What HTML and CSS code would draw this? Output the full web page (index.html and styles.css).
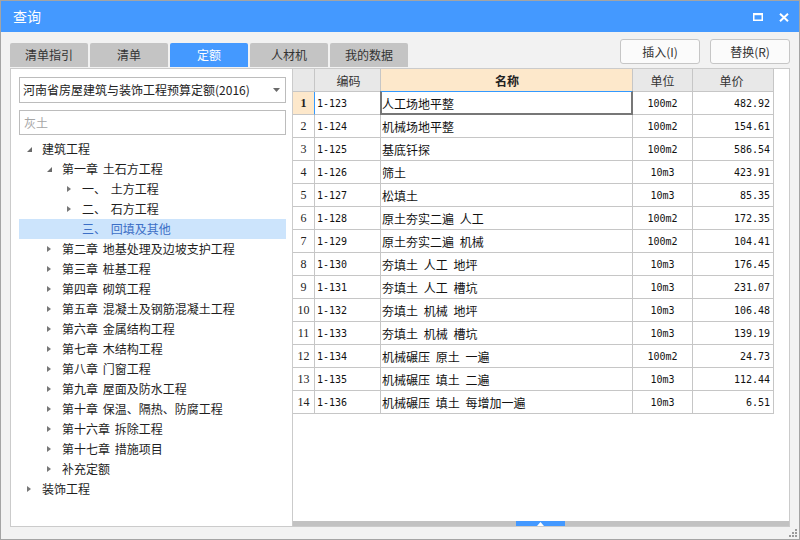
FILE: index.html
```html
<!DOCTYPE html>
<html lang="zh-CN">
<head>
<meta charset="utf-8">
<title>查询</title>
<link rel="stylesheet" href="styles.css">
</head>
<body>
<div class="window">
  <div class="titlebar">
    <span class="title">查询</span>
    <div class="win-btns">
      <svg class="ico-max" width="10" height="8" viewBox="0 0 10 8"><rect x="0.75" y="1" width="8.5" height="6.25" fill="none" stroke="#fff" stroke-width="1.5"/><rect x="0" y="0" width="10" height="2.2" fill="#fff"/></svg>
      <svg class="ico-close" width="10" height="9" viewBox="0 0 10 9"><path d="M1 0.8 L9 8.2 M9 0.8 L1 8.2" stroke="#fff" stroke-width="2"/></svg>
    </div>
  </div>
  <div class="body">
    <div class="topbar">
      <div class="tabs">
        <div class="tab">清单指引</div>
        <div class="tab">清单</div>
        <div class="tab active">定额</div>
        <div class="tab">人材机</div>
        <div class="tab">我的数据</div>
      </div>
      <div class="actions">
        <button class="btn">插入(I)</button>
        <button class="btn">替换(R)</button>
      </div>
    </div>
    <div class="panels">
      <div class="left">
        <div class="select">
          <span class="select-text">河南省房屋建筑与装饰工程预算定额(2016)</span>
          <svg class="select-arrow" width="7" height="4" viewBox="0 0 7 4"><path d="M0 0 H7 L3.5 4 Z" fill="#6a6a6a"/></svg>
        </div>
        <div class="search">灰土</div>
        <ul class="tree">
          <li class="node l0"><span class="tg exp"></span><span class="lbl">建筑工程</span></li>
          <li class="node l1"><span class="tg exp"></span><span class="lbl">第一章 土石方工程</span></li>
          <li class="node l2"><span class="tg col"></span><span class="lbl">一、 土方工程</span></li>
          <li class="node l2"><span class="tg col"></span><span class="lbl">二、 石方工程</span></li>
          <li class="node l2 sel"><span class="tg"></span><span class="lbl">三、 回填及其他</span></li>
          <li class="node l1"><span class="tg col"></span><span class="lbl">第二章 地基处理及边坡支护工程</span></li>
          <li class="node l1"><span class="tg col"></span><span class="lbl">第三章 桩基工程</span></li>
          <li class="node l1"><span class="tg col"></span><span class="lbl">第四章 砌筑工程</span></li>
          <li class="node l1"><span class="tg col"></span><span class="lbl">第五章 混凝土及钢筋混凝土工程</span></li>
          <li class="node l1"><span class="tg col"></span><span class="lbl">第六章 金属结构工程</span></li>
          <li class="node l1"><span class="tg col"></span><span class="lbl">第七章 木结构工程</span></li>
          <li class="node l1"><span class="tg col"></span><span class="lbl">第八章 门窗工程</span></li>
          <li class="node l1"><span class="tg col"></span><span class="lbl">第九章 屋面及防水工程</span></li>
          <li class="node l1"><span class="tg col"></span><span class="lbl">第十章 保温、隔热、防腐工程</span></li>
          <li class="node l1"><span class="tg col"></span><span class="lbl">第十六章 拆除工程</span></li>
          <li class="node l1"><span class="tg col"></span><span class="lbl">第十七章 措施项目</span></li>
          <li class="node l1"><span class="tg col"></span><span class="lbl">补充定额</span></li>
          <li class="node l0"><span class="tg col"></span><span class="lbl">装饰工程</span></li>
        </ul>
      </div>
      <div class="right">
        <div class="grid">
          <div class="row head">
            <div class="c-num"></div>
            <div class="c-code h">编码</div>
            <div class="c-name h hsel">名称</div>
            <div class="c-unit h">单位</div>
            <div class="c-price h">单价</div>
          </div>
          <div class="row cur">
            <div class="c-num numsel">1</div>
            <div class="c-code">1-123</div>
            <div class="c-name cellsel">人工场地平整</div>
            <div class="c-unit">100m2</div>
            <div class="c-price">482.92</div>
          </div>
          <div class="row"><div class="c-num">2</div><div class="c-code">1-124</div><div class="c-name">机械场地平整</div><div class="c-unit">100m2</div><div class="c-price">154.61</div></div>
          <div class="row"><div class="c-num">3</div><div class="c-code">1-125</div><div class="c-name">基底钎探</div><div class="c-unit">100m2</div><div class="c-price">586.54</div></div>
          <div class="row"><div class="c-num">4</div><div class="c-code">1-126</div><div class="c-name">筛土</div><div class="c-unit">10m3</div><div class="c-price">423.91</div></div>
          <div class="row"><div class="c-num">5</div><div class="c-code">1-127</div><div class="c-name">松填土</div><div class="c-unit">10m3</div><div class="c-price">85.35</div></div>
          <div class="row"><div class="c-num">6</div><div class="c-code">1-128</div><div class="c-name">原土夯实二遍 人工</div><div class="c-unit">100m2</div><div class="c-price">172.35</div></div>
          <div class="row"><div class="c-num">7</div><div class="c-code">1-129</div><div class="c-name">原土夯实二遍 机械</div><div class="c-unit">100m2</div><div class="c-price">104.41</div></div>
          <div class="row"><div class="c-num">8</div><div class="c-code">1-130</div><div class="c-name">夯填土 人工 地坪</div><div class="c-unit">10m3</div><div class="c-price">176.45</div></div>
          <div class="row"><div class="c-num">9</div><div class="c-code">1-131</div><div class="c-name">夯填土 人工 槽坑</div><div class="c-unit">10m3</div><div class="c-price">231.07</div></div>
          <div class="row"><div class="c-num">10</div><div class="c-code">1-132</div><div class="c-name">夯填土 机械 地坪</div><div class="c-unit">10m3</div><div class="c-price">106.48</div></div>
          <div class="row"><div class="c-num">11</div><div class="c-code">1-133</div><div class="c-name">夯填土 机械 槽坑</div><div class="c-unit">10m3</div><div class="c-price">139.19</div></div>
          <div class="row"><div class="c-num">12</div><div class="c-code">1-134</div><div class="c-name">机械碾压 原土 一遍</div><div class="c-unit">100m2</div><div class="c-price">24.73</div></div>
          <div class="row"><div class="c-num">13</div><div class="c-code">1-135</div><div class="c-name">机械碾压 填土 二遍</div><div class="c-unit">10m3</div><div class="c-price">112.44</div></div>
          <div class="row"><div class="c-num">14</div><div class="c-code">1-136</div><div class="c-name">机械碾压 填土 每增加一遍</div><div class="c-unit">10m3</div><div class="c-price">6.51</div></div>
        </div>
        <div class="hscroll">
          <div class="thumb"><svg width="7" height="4" viewBox="0 0 7 4"><path d="M0 4 H7 L3.5 0 Z" fill="#fff"/></svg></div>
        </div>
      </div>
    </div>
  </div>
  <svg class="grip" width="9" height="9" viewBox="0 0 9 9">
    <rect x="6" y="0" width="2" height="2" fill="#9a9a9a"/>
    <rect x="3" y="3" width="2" height="2" fill="#9a9a9a"/>
    <rect x="6" y="3" width="2" height="2" fill="#9a9a9a"/>
    <rect x="0" y="6" width="2" height="2" fill="#9a9a9a"/>
    <rect x="3" y="6" width="2" height="2" fill="#9a9a9a"/>
    <rect x="6" y="6" width="2" height="2" fill="#9a9a9a"/>
  </svg>
</div>
</body>
</html>
```

FILE: styles.css
```css
* { box-sizing: border-box; }
html, body { margin: 0; padding: 0; }
body {
  font-family: "Noto Sans CJK SC", "Noto Sans", sans-serif;
  font-size: 12px;
  color: #222;
  background: #f2f2f2;
}
.window {
  position: relative;
  width: 800px;
  height: 540px;
  border: 1px solid #a4a4a4;
  background: #f2f2f2;
  overflow: hidden;
}
.titlebar {
  height: 31px;
  background: #4499ff;
  display: flex;
  align-items: center;
  justify-content: space-between;
  padding: 0 10px 0 12px;
}
.title {
  color: #fff;
  font-size: 14px;
  line-height: 31px;
}
.win-btns {
  display: flex;
  align-items: center;
  gap: 16px;
  padding-top: 1px;
}
.ico-max, .ico-close { display: block; }

.body {
  padding: 7px 9px 0 9px;
}
.topbar {
  height: 29px;
  display: flex;
  justify-content: space-between;
}
.tabs {
  align-self: flex-end;
  display: flex;
  gap: 2px;
  margin-bottom: 1px;
}
.tab {
  width: 78px;
  height: 24px;
  line-height: 24px;
  text-align: center;
  background: #c4c4c4;
  color: #333;
  font-size: 12px;
  border-radius: 2px 2px 0 0;
}
.tab.active {
  background: #4499ff;
  color: #fff;
}
.actions {
  align-self: flex-start;
  display: flex;
  gap: 10px;
}
.btn {
  width: 80px;
  height: 25px;
  border: 1px solid #c6c6c6;
  border-radius: 3px;
  background: #fbfbfb;
  font-family: "Noto Sans CJK SC", "Noto Sans", sans-serif;
  font-size: 12px;
  color: #333;
  padding: 0;
}

.panels {
  display: flex;
  height: 459px;
}
.left {
  width: 283px;
  border: 1px solid #cbcbcb;
  background: #fff;
  padding: 8px 0 0 8px;
}
.select {
  width: 267px;
  height: 26px;
  border: 1px solid #bcbcbc;
  display: flex;
  align-items: center;
  justify-content: space-between;
  padding: 0 5px 0 3px;
}
.select-text { line-height: 24px; color: #222; }
.select-arrow { display: block; }
.search {
  width: 267px;
  height: 25px;
  margin-top: 7px;
  border: 1px solid #bcbcbc;
  color: #a6a6a6;
  line-height: 23px;
  padding-left: 4px;
}
.tree {
  list-style: none;
  margin: 4px 0 0 0;
  padding: 0;
  width: 267px;
}
.node {
  height: 20px;
  display: flex;
  align-items: center;
  line-height: 20px;
  color: #1e1e1e;
  word-spacing: 2px;
}
.node.l0 { padding-left: 8px; }
.node.l1 { padding-left: 28px; }
.node.l2 { padding-left: 48px; }
.node.sel { background: #cce4fc; color: #3c6fc6; }
.tg {
  width: 15px;
  height: 20px;
  position: relative;
  flex: none;
}
.tg.exp::before {
  content: "";
  position: absolute;
  left: 0;
  top: 8px;
  width: 0;
  height: 0;
  border-left: 5px solid transparent;
  border-bottom: 5px solid #6a6a6a;
}
.tg.col::before {
  content: "";
  position: absolute;
  left: 0;
  top: 6.5px;
  width: 0;
  height: 0;
  border-top: 3.5px solid transparent;
  border-bottom: 3.5px solid transparent;
  border-left: 4px solid #777;
}

.right {
  flex: 1;
  border: 1px solid #cbcbcb;
  border-left: none;
  background: #fff;
  display: flex;
  flex-direction: column;
}
.grid { width: 481px; }
.row {
  display: grid;
  grid-template-columns: 22px 66px 252px 60px 81px;
  height: 23px;
}
.row > div {
  border-right: 1px solid #c6c6c6;
  border-bottom: 1px solid #c6c6c6;
  display: flex;
  align-items: center;
  white-space: pre;
  overflow: visible;
}
.row.head > div {
  background: #e8e8e8;
  justify-content: center;
  color: #333;
  font-family: "Noto Sans CJK SC", "Noto Sans", sans-serif;
  font-size: 12px;
}
.row.head > .hsel {
  background: #fde8cb;
  font-weight: bold;
  color: #222;
}
.c-num {
  justify-content: center;
  font-family: "Liberation Serif", serif;
  font-size: 12px;
  color: #222;
}
.c-num.numsel {
  background: #fde8cb;
  font-weight: bold;
  border-right-color: #3399ff !important;
}
.c-code {
  font-family: "DejaVu Sans Mono", monospace;
  font-size: 10px;
  padding-left: 2px;
  color: #111;
}
.c-name {
  font-size: 12px;
  padding-left: 1px;
  color: #111;
  word-spacing: 3px;
}
.c-unit {
  font-family: "DejaVu Sans Mono", monospace;
  font-size: 10px;
  justify-content: center;
  color: #111;
}
.c-price {
  font-family: "DejaVu Sans Mono", monospace;
  font-size: 10px;
  justify-content: flex-end;
  padding-right: 3px;
  color: #111;
}
.cellsel { position: relative; }
.cellsel::after {
  content: "";
  position: absolute;
  left: -1px;
  top: -1px;
  right: -1px;
  bottom: -1px;
  border: 2px solid #777;
  border-top: 1px solid #3399ff;
}
.hscroll {
  margin-top: auto;
  height: 5px;
  background: #c2c2c2;
}
.thumb {
  margin-left: 223px;
  width: 49px;
  height: 5px;
  background: #4499ff;
  display: flex;
  align-items: center;
  justify-content: center;
}
.thumb svg { display: block; }
.grip {
  position: absolute;
  right: 1px;
  bottom: 1px;
}
```
